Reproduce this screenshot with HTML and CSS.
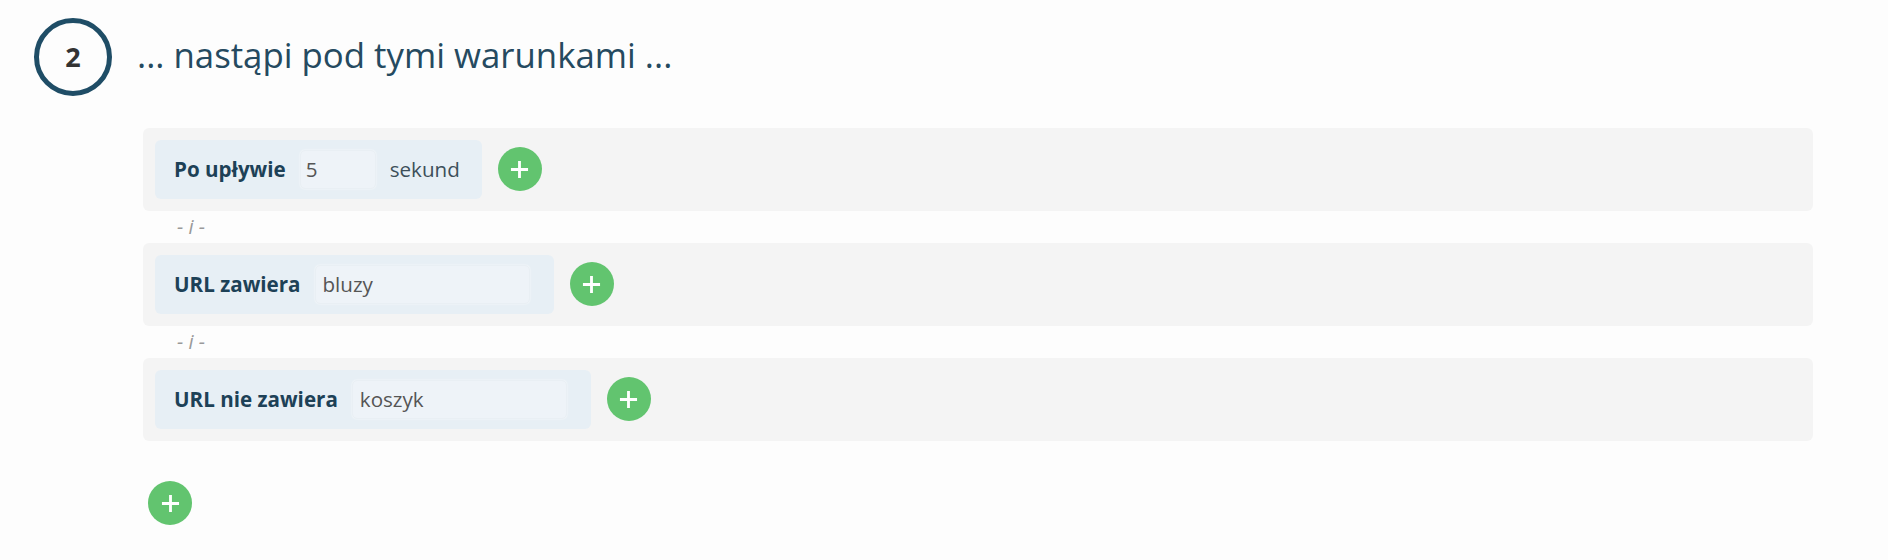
FILE: index.html
```html
<!DOCTYPE html>
<html lang="pl">
<head>
    <meta charset="UTF-8">
    <title>Warunki wyświetlenia</title>
    <meta name="viewport" content="width=device-width, initial-scale=1">
    <link rel="stylesheet" href="styles.css">
</head>
<body>
    <div class="step">
        <div class="step-head">
            <div class="step-num">2</div>
            <h2>... nastąpi pod tymi warunkami ...</h2>
        </div>

        <div class="conditions">
            <div class="cond-row">
                <div class="cond">
                    <span class="cond-label">Po upływie</span>
                    <input type="text" class="cond-input short" value="5">
                    <span class="cond-unit">sekund</span>
                </div>
                <button class="add-btn" type="button" title="Dodaj"><svg viewBox="0 0 20 20"><path d="M10 1v18M1 10h18"/></svg></button>
            </div>
            <div class="sep">- i -</div>
            <div class="cond-row">
                <div class="cond">
                    <span class="cond-label">URL zawiera</span>
                    <input type="text" class="cond-input" value="bluzy">
                </div>
                <button class="add-btn" type="button" title="Dodaj"><svg viewBox="0 0 20 20"><path d="M10 1v18M1 10h18"/></svg></button>
            </div>
            <div class="sep">- i -</div>
            <div class="cond-row">
                <div class="cond">
                    <span class="cond-label">URL nie zawiera</span>
                    <input type="text" class="cond-input" value="koszyk">
                </div>
                <button class="add-btn" type="button" title="Dodaj"><svg viewBox="0 0 20 20"><path d="M10 1v18M1 10h18"/></svg></button>
            </div>

            <div class="add-group">
                <button class="add-btn" type="button" title="Dodaj grupę"><svg viewBox="0 0 20 20"><path d="M10 1v18M1 10h18"/></svg></button>
            </div>
        </div>
    </div>
</body>
</html>
```

FILE: styles.css
```css
body { font-family: "Open Sans", "Noto Sans", sans-serif; background: #fdfdfd; margin: 0; padding: 0; color: #254a60; }
.step { padding: 18px 75px 0 34px; }
.step-head { display: flex; align-items: center; gap: 25px; height: 77px; }
.step-num {
    width: 68px; height: 68px; border: 5px solid #1f4d66; border-radius: 50%;
    display: flex; align-items: center; justify-content: center;
    font-size: 27px; font-weight: 700; color: #333;
}
h2 { margin: 0 0 4px; font-size: 34.8px; font-weight: 400; color: #254a60; }

.conditions { margin: 33px 0 0 109px; }
.cond-row {
    display: flex; align-items: center; gap: 16px;
    background: #f4f4f4; border-radius: 6px; padding: 11px 12px 12px; height: 60px;
}
.cond {
    display: flex; align-items: center; height: 59px; padding: 0 22px 0 19px;
    background: #e7eff5; border-radius: 6px; font-size: 20.6px;
}
.cond-label { font-weight: 700; color: #1d4157; margin-right: 14px; }
.cond-unit { color: #3d4f5a; margin-left: 14px; }
.cond-input {
    width: 215px; height: 39px; box-sizing: border-box; padding: 0 7px; margin-right: 2px;
    border: 1px solid #e9eff4; border-radius: 5px; background: #eef3f8;
    box-shadow: 0 0 2px rgba(255,255,255,.8);
    font-family: inherit; font-size: 20.6px; color: #555;
}
.cond-input.short { width: 76px; padding-left: 5px; margin-right: 0; }
.add-btn {
    width: 44px; height: 44px; border-radius: 50%; border: none; background: #62c46f;
    padding: 0; cursor: pointer; display: flex; align-items: center; justify-content: center;
}
.add-btn svg { width: 19px; height: 19px; }
.add-btn path { stroke: #fff; stroke-width: 3; fill: none; }
.sep { height: 32px; line-height: 32px; padding-left: 34px; font-size: 20px; font-style: italic; color: #999; }
.add-group { padding: 40px 0 0 5px; }
```
